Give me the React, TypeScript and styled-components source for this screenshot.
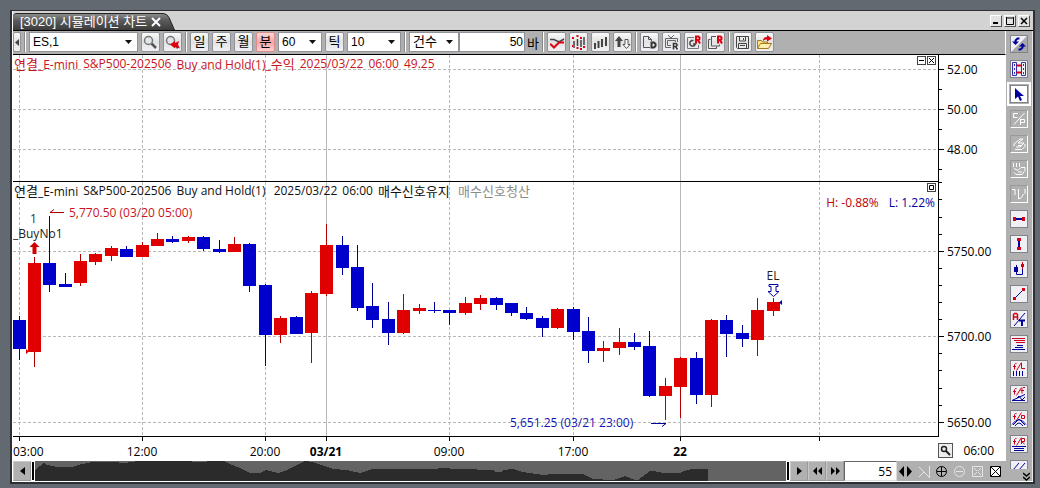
import React from "react";
import styled, { createGlobalStyle, css } from "styled-components";

const chartFont = `"Open Sans", "Noto Sans CJK KR", sans-serif`;
const uiFont = `"Liberation Sans", "Noto Sans CJK KR", sans-serif`;
const RED = "#e00000";
const BLUE = "#0000cc";
const NAVY = "#00009c";
const GREY = "#b0b0b0";

const GlobalStyle = createGlobalStyle`
  * { box-sizing: border-box; }
  body { margin: 0; background: #636970; font-family: ${chartFont}; font-size: 12px; color: #000; }
  button, input, select { font: inherit; color: inherit; margin: 0; padding: 0; border-radius: 0; }
  svg { display: block; flex: none; }
`;

const Page = styled.div`
  min-height: 100vh;
  padding: 10px 5px 4px 10px;
`;
const Window = styled.div`
  border: 2px solid #2c2f33;
  border-top-width: 1px;
  background: #fff;
  padding: 0 0 1px 1px;
`;
const TitleBar = styled.header`
  display: flex;
  align-items: flex-end;
  height: 20px;
  padding-right: 3px;
  background: #d3d3d3;
  border-bottom: 1px solid #000;
`;
const Tab = styled.div`
  display: flex;
  align-items: center;
  height: 17px;
  padding-left: 7px;
  gap: 4px;
  border-top: 1px solid #222;
  border-top-left-radius: 4px;
  background: linear-gradient(#8a8a8a, #5c5c5c 40%, #3c3c3c);
  color: #fff;
  font-family: ${uiFont};
  font-size: 13px;
  line-height: 16px;
  white-space: nowrap;
`;
const TabClose = styled.button`
  border: 0;
  background: none;
  width: 10px;
  height: 10px;
`;
const Controls = styled.div`
  display: flex;
  gap: 2px;
  margin-left: auto;
  align-self: center;
`;
const WinButton = styled.button`
  display: grid;
  place-items: center;
  width: 12px;
  height: 12px;
  background: #e4e4e4;
  border: 1px solid #fff;
  border-right-color: #555;
  border-bottom-color: #555;
`;
const Body = styled.div`
  display: flex;
`;
const Main = styled.main`
  flex: 1;
  min-width: 0;
`;

const Toolbar = styled.div`
  display: flex;
  align-items: flex-start;
  gap: 3px;
  height: 24px;
  padding-top: 1px;
  overflow: hidden;
  background: ${GREY};
  border-bottom: 1px solid #000;
  border-right: 1px solid #fff;
  font-family: ${uiFont};
  font-size: 12px;
`;
const ToolButton = styled.button<{ $on?: boolean; $slim?: boolean }>`
  display: grid;
  place-items: center;
  flex: none;
  width: ${(p) => (p.$slim ? 8 : 19)}px;
  height: 20px;
  border: 1px solid ${(p) => (p.$on ? "#d88c8c" : "#8f9299")};
  border-radius: 2px;
  background: ${(p) =>
    p.$on
      ? "linear-gradient(#fbd9d9, #f5a5a5 50%, #fcd0d0)"
      : "linear-gradient(#fafafa, #e2e2e4 50%, #f2f2f4)"};
  font-size: 13px;
  line-height: 16px;
`;
const Divider = styled.i`
  flex: none;
  width: 2px;
  height: 20px;
  border-left: 1px solid #8a8a8a;
  background: #fff;
`;
const Combo = styled.label<{ $w: number }>`
  position: relative;
  flex: none;
  width: ${(p) => p.$w}px;
  height: 20px;
  svg {
    position: absolute;
    right: 6px;
    top: 8px;
    pointer-events: none;
  }
`;
const fieldLook = css`
  width: 100%;
  height: 20px;
  border: 1px solid #8f9299;
  background: #fff;
  line-height: 18px;
`;
const ComboSelect = styled.select<{ $hangul?: boolean }>`
  ${fieldLook}
  appearance: none;
  padding-left: 3px;
  font-size: ${(p) => (p.$hangul ? 13 : 12)}px;
`;
const CountField = styled.label`
  display: flex;
  align-items: center;
  flex: none;
  gap: 2px;
  margin-left: -3px;
  font-size: 13px;
`;
const CountInput = styled.input`
  ${fieldLook}
  width: 66px;
  padding-right: 1px;
  text-align: right;
  font-size: 12px;
`;

const Pane = styled.section<{ $h: number }>`
  display: flex;
  height: ${(p) => p.$h}px;
`;
const Plot = styled.div`
  position: relative;
  flex: 1;
  min-width: 0;
  overflow: hidden;
  border-right: 1px solid #000;
  border-bottom: 1px solid #000;
`;
const Caption = styled.p<{ $color: string; $gap: number }>`
  position: absolute;
  left: 1px;
  top: 1px;
  display: flex;
  gap: ${(p) => p.$gap}px;
  margin: 0;
  color: ${(p) => p.$color};
  line-height: 16px;
  white-space: nowrap;
`;
const Hangul = styled.span<{ $muted?: boolean }>`
  font-size: 13px;
  color: ${(p) => (p.$muted ? "#8c8c8c" : "inherit")};
`;
const PaneButtons = styled.div`
  position: absolute;
  top: 1px;
  right: 2px;
  display: flex;
  gap: 1px;
`;
const PaneButton = styled.button`
  display: grid;
  place-items: center;
  width: 9px;
  height: 9px;
  border: 1px solid #444;
  background: #fff;
`;
const Extremes = styled.p`
  position: absolute;
  right: 3px;
  top: 13px;
  margin: 0;
  display: flex;
  gap: 10px;
  line-height: 16px;
  color: #c00000;
  span + span { color: #0000a0; }
`;
const Axis = styled.div`
  flex: none;
  width: 67px;
`;
const TimeAxis = styled.div`
  display: flex;
  height: 24px;
`;
const TimePlot = styled.div`
  flex: 1;
  min-width: 0;
  overflow: hidden;
`;
const TimeSide = styled.div`
  flex: none;
  display: flex;
  align-items: center;
  justify-content: space-between;
  width: 68px;
  padding: 2px 12px 0 0;
`;
const ZoomButton = styled.button`
  display: grid;
  place-items: center;
  width: 15px;
  height: 15px;
  border: 1px solid #555;
  background: #eee;
`;

const Scroller = styled.div`
  display: flex;
  align-items: stretch;
  height: 20px;
  background: ${GREY};
`;
const Step = styled.button`
  display: grid;
  place-items: center;
  flex: none;
  width: 18px;
  border: 1px solid #c8c8c8;
  border-right-color: #999;
  border-bottom-color: #999;
  background: ${GREY};
`;
const Track = styled.div`
  display: flex;
  flex: 1;
  min-width: 0;
  background: #636363;
`;
const Overview = styled.div`
  flex: 1;
  min-width: 0;
  overflow: hidden;
`;
const Handle = styled.i`
  flex: none;
  width: 4px;
  border: 1px solid #fff;
  background: #000;
`;
const BarCount = styled.input`
  flex: none;
  width: 53px;
  border: 1px solid #666;
  border-right-color: #ddd;
  border-bottom-color: #ddd;
  background: #fff;
  text-align: right;
  padding-right: 4px;
`;
const ScaleTools = styled.div`
  display: flex;
  flex: none;
  align-items: center;
  justify-content: space-between;
  width: 109px;
  padding: 0 3px 0 1px;
`;
const ScaleButton = styled.button`
  display: grid;
  place-items: center;
  width: 15px;
  height: 16px;
  border: 0;
  background: none;
`;

const Sidebar = styled.nav`
  display: flex;
  flex-direction: column;
  align-items: center;
  flex: none;
  gap: 7px;
  width: 27px;
  padding-top: 4px;
  border-right: 1px solid #e8e8e8;
  background: ${GREY};
`;
const DrawButton = styled.button<{ $state?: "on" | "off"; $cut?: boolean }>`
  display: flex;
  align-items: flex-start;
  flex: none;
  width: 18px;
  height: ${(p) => (p.$cut ? 9 : 18)}px;
  overflow: hidden;
  border: 1px solid #80838a;
  ${(p) => p.$cut && "border-bottom: 0;"}
  background: #f0f0f4;
  ${(p) =>
    p.$state === "off" &&
    css`
      border-color: #999 #fff #fff #999;
      background: ${GREY};
    `}
  ${(p) =>
    p.$state === "on" &&
    css`
      background: #fff;
      outline: 2px solid #fff;
      outline-offset: 1px;
    `}
`;
const MoreButton = styled.button`
  align-self: flex-end;
  margin: -4px 2px 0 0;
  border: 0;
  background: none;
`;

type GlyphProps = { w?: number; h?: number; children: React.ReactNode };
const Glyph = ({ w = 16, h = 16, children }: GlyphProps) => (
  <svg width={w} height={h} viewBox={`0 0 ${w} ${h}`} fill="none" aria-hidden="true">
    {children}
  </svg>
);
const Arrow = () => (
  <Glyph w={7} h={4}><path d="M0 0h7L3.500 4z" fill="#111" /></Glyph>
);

/* Toolbar drawings, 17 x 17 */
const lens = (
  <>
    <path d="M9.500 9.500L14 14" stroke="#555" strokeWidth="2.500" />
    <circle cx="6.500" cy="6.500" r="4" fill="#dfe6ea" stroke="#777" strokeWidth="1.500" />
  </>
);
const redR = <path d="M11 9.500V2.500h2.500l1 1v1.500l-1 1H11M13 6l2 3.500" stroke="#e00010" strokeWidth="2" />;
const toolIcons: Record<string, React.ReactNode> = {
  search: lens,
  searchBack: (
    <>
      {lens}
      <path d="M6 10.500L11 7v2l4-2-1 3.500 2 4-5-2v2z" fill="#e00010" />
    </>
  ),
  trend: (
    <>
      <path d="M2 5.500h4l4 2h2l4-2.500" stroke="#444" strokeWidth="1.500" />
      <path d="M2 10.500h1l3 3 5-5h5" stroke="#e00010" strokeWidth="2" />
    </>
  ),
  bars: (
    <>
      <path d="M4 7v7M7.500 5v7M11 6v7M14 3v8" stroke="#444" strokeWidth="1.500" />
      <path d="M2 3h2v2H2zM6.500 1h2v2h-2zM10 3h2v2h-2zM2 11h1v2H2zM6.500 13h2v2h-2zM10 14h2v2h-2zM13 12h2v2h-2z" fill="#e00010" />
    </>
  ),
  volume: <path d="M3 9v6M6.500 7v7M10 5v8M14 3v9" stroke="#444" strokeWidth="2" />,
  updown: (
    <>
      <path d="M5 2l4 5H6.500v6h-3V7H1z" fill="#444" />
      <path d="M11 5.500h3v5h2l-3.500 4-3.500-4h2z" fill="#fff" stroke="#555" />
    </>
  ),
  docD: (
    <>
      <path d="M9 13.500H2.500v-11h5l3 3V7M7.500 2.500v3h3" stroke="#555" />
      <path d="M10.500 8.500H13l1.500 1.500v2L13 13.500h-2.500z" stroke="#333" strokeWidth="2" />
    </>
  ),
  tvR: (
    <>
      <path d="M5 1l3 3 3-3M8 13.500H2.500V4.500h12V8M8 11.500H4.500v-5h8V8" stroke="#666" />
      <path d="M10.500 15.500V9.500H13l1 1v1l-1 1h-2.500M12.500 12.500l2 3" stroke="#333" strokeWidth="1.500" />
    </>
  ),
  refreshR: (
    <>
      <path d="M9 3.500H2.500v11h11V11" stroke="#777" />
      <path d="M8.500 6.500h-2L5 8v2.500L6.500 12H9l1.500-2H8" stroke="#444" strokeWidth="1.500" />
      {redR}
    </>
  ),
  stackR: (
    <>
      <path d="M3.500 5.500h-2v9h8v-2" stroke="#555" />
      <path d="M9 2.500H4.500v9.500h8v-1.500" stroke="#555" />
      {redR}
    </>
  ),
  save: (
    <>
      <path d="M2.500 2.500h12v12h-11l-1-1z" stroke="#444" />
      <path d="M5.500 3v4h6V3M4.500 14v-4.500h8V14M9.500 4v2M6 11.500h5" stroke="#444" />
    </>
  ),
  open: (
    <>
      <path d="M1.500 14.500V6.500h4l1 1.500h5v2" fill="#ffe48a" stroke="#a8781c" />
      <path d="M1.500 14.500l3-5h11l-3 5z" fill="#ffeeb0" stroke="#a8781c" />
      <path d="M7 7q0-4 4-4V1l5 3.500-5 3V5.500Q8.500 5 7 7z" fill="#e00010" />
    </>
  ),
};
const Tool = ({ icon, label }: { icon: string; label: string }) => (
  <ToolButton aria-label={label}><Glyph w={17} h={17}>{toolIcons[icon]}</Glyph></ToolButton>
);

/* Small stroked marks used in the drawing palette */
const markF = "M5.500 2.500h-1l-1 1v5M2 5.500h3";
const slash = "M5.500 9.500l5-8";

type Draw = { label: string; state?: "on" | "off"; cut?: boolean; art: React.ReactNode };
const drawTools: Draw[] = [
  {
    label: "새로고침",
    art: (
      <>
        <path d="M0 16L16 0v16z" fill="#a8a8a8" />
        <path d="M8.500 2.500h-2l-2 2v2" stroke={NAVY} strokeWidth="2" />
        <path d="M1 5.500h7L4.500 9z" fill={NAVY} />
        <path d="M7.500 13.500h2l2-2v-2" stroke={NAVY} strokeWidth="2" />
        <path d="M8 10.500h7L11.500 7z" fill={NAVY} />
      </>
    ),
  },
  {
    label: "차트 연결",
    art: (
      <>
        <path d="M1.500 1.500h4v13h-4zM10.500 1.500h4v13h-4zM3.500 3v2M3.500 7v2M3.500 11v2M12.500 3v2M12.500 7v2M12.500 11v2" stroke="#3030a8" />
        <path d="M5 4.500h6M5 11.500h6M7 3v3M9 3v3M7 10v3M9 10v3" stroke="#d00018" />
      </>
    ),
  },
  { label: "선택", state: "on", art: <path d="M4 2v11l3-2.500 2 4.500 2-1-2-4h4z" fill={NAVY} /> },
  { label: "추세 각도", state: "off", art: <path d="M7 2.500H2.500v4h4M3 13.500L13.500 2M9 8.500h4.500v3H9M9.500 9v5" stroke="#fff" /> },
  { label: "지우개", state: "off", art: <path d="M3 10V8l6-5h3l-5 4h6l-4 4H5M4 13.500h7l3-3V8M7 9.500h3" stroke="#fff" /> },
  { label: "모두 지우기", state: "off", art: <path d="M2.500 2v4M5.500 2v4M8.500 2v4M3 7.500l4 2 3-3h4v3l-3 4H5l-2-2M7 11h4" stroke="#fff" /> },
  { label: "되돌리기", state: "off", art: <path d="M1 3.500h3V9M7.500 3v10M7.500 13q3 0 5-5M14 3v5" stroke="#fff" /> },
  { label: "수평선", art: (<><path d="M3 8h10" stroke={NAVY} strokeWidth="2" /><path d="M2 6h3v4H2zM11 6h3v4h-3z" fill="#d00018" /></>) },
  { label: "수직선", art: (<><path d="M8 4v8" stroke={NAVY} strokeWidth="2" /><path d="M6 2h4v3H6zM6 11h4v3H6z" fill="#d00018" /></>) },
  { label: "자석", art: (<><path d="M3 6h4v5H3z" fill={NAVY} /><path d="M5.500 4v9.500h6V8" stroke={NAVY} /><path d="M10 3h3v3h-3z" fill="#d00018" /><path d="M11.500 1v7" stroke="#d00018" /></>) },
  { label: "추세선", art: (<><path d="M3 13L13 3" stroke={NAVY} /><path d="M2 11h3v3H2zM11 2h3v3h-3z" fill="#d00018" /></>) },
  { label: "텍스트", art: (<><path d="M2.500 9V3.500l1-1h2l1 1V9M2.500 6h4" stroke="#d00018" strokeWidth="1.500" /><path d="M3 15L14 2" stroke={NAVY} /><path d="M8 9.500h6M11 9v6" stroke={NAVY} strokeWidth="2" /></>) },
  { label: "되돌림", art: (<><path d="M1 2.500h13M3 4.500h11M5 6.500h9" stroke="#d00018" /><path d="M6 9.500h6M4 11.500h8M1 13.500h13" stroke={NAVY} /></>) },
  { label: "피보나치 선", art: (<><path d={`${markF}${slash}M10.500 2v5.500H14`} stroke="#d00018" /><path d="M2.500 10v5M5.500 10v5M8.500 10v5M11.500 10v5" stroke={NAVY} /></>) },
  { label: "피보나치 팬", art: (<><path d={`${markF}${slash}M14 1.500h-2l-1 1v5M9.500 4.500H13`} stroke="#d00018" /><path d="M1 14.500h13M1 14.500l13-6M5 13l3-3 3 4 3-3" stroke={NAVY} /></>) },
  { label: "피보나치 원호", art: (<><path d={`${markF}${slash}M10.500 7.500V4.500h3v3z`} stroke="#d00018" /><path d="M1 13.500Q8 4 15 13.500M4 15q4-6 8 0M8 8L2 14M8 8l6 6" stroke={NAVY} /></>) },
  { label: "피보나치 범위", art: (<><path d={`${markF}${slash}M10.500 8V2.500h3v3h-3l3 2.500`} stroke="#d00018" /><path d="M1 10.500h14M3 12.500h10M3 14.500h10" stroke={NAVY} /></>) },
  { label: "평행선", cut: true, art: <path d="M2 9L8 2M8 9l6-7" stroke={NAVY} /> },
];

/* Candles: centre x, rising?, high, body top, body bottom, low */
type Candle = [number, 0 | 1, number, number, number, number];
const candles: Candle[] = [
  [19, 0, 316, 320, 349, 360], [34, 1, 257, 263, 352, 367], [49, 0, 216, 263, 285, 292],
  [65, 0, 273, 284, 287, 287], [80, 1, 254, 261, 283, 286], [95, 1, 253, 254, 262, 265],
  [111, 1, 246, 248, 256, 261], [126, 0, 246, 249, 257, 257], [142, 1, 242, 245, 257, 257],
  [157, 1, 233, 239, 246, 246], [172, 0, 236, 239, 242, 243], [188, 1, 236, 237, 241, 243],
  [203, 0, 236, 237, 249, 251], [219, 0, 240, 249, 252, 253], [234, 1, 237, 244, 252, 252],
  [249, 0, 243, 244, 286, 292], [265, 0, 284, 285, 335, 366], [280, 1, 316, 318, 335, 343],
  [296, 0, 316, 317, 334, 334], [311, 1, 291, 293, 333, 363], [326, 1, 224, 245, 294, 296],
  [342, 0, 236, 245, 268, 275], [357, 0, 245, 267, 308, 311], [372, 0, 283, 306, 320, 328],
  [388, 0, 302, 319, 333, 345], [403, 1, 294, 310, 333, 334], [419, 1, 304, 308, 311, 314],
  [434, 0, 302, 310, 311, 313], [449, 0, 310, 310, 313, 325], [465, 1, 297, 303, 313, 315],
  [480, 1, 295, 298, 304, 310], [496, 0, 297, 298, 305, 310], [511, 0, 303, 303, 313, 316],
  [526, 0, 307, 313, 319, 320], [542, 0, 316, 318, 328, 337], [557, 1, 308, 309, 328, 329],
  [573, 0, 307, 309, 332, 340], [588, 0, 317, 331, 351, 363], [603, 1, 341, 348, 351, 362],
  [619, 1, 328, 342, 348, 355], [634, 0, 333, 342, 347, 350], [649, 0, 331, 346, 396, 397],
  [665, 1, 378, 386, 396, 420], [680, 1, 357, 358, 387, 418], [696, 0, 352, 358, 395, 404],
  [711, 1, 319, 320, 395, 407], [726, 0, 315, 320, 334, 357], [742, 0, 325, 333, 339, 347],
  [757, 1, 298, 310, 340, 356], [773, 1, 298, 302, 311, 316],
];
const LEFT = 13;
const times: { x: number; label?: string; day?: boolean }[] = [
  { x: 19, label: "03:00" }, { x: 142, label: "12:00" }, { x: 265, label: "20:00" },
  { x: 326, label: "03/21", day: true }, { x: 449, label: "09:00" }, { x: 573, label: "17:00" },
  { x: 680, label: "22", day: true }, { x: 819 },
];

const Grid = ({ rows, height }: { rows: number[]; height: number }) => (
  <g stroke="#b8b8b8" shapeRendering="crispEdges">
    {rows.map((y) => (
      <line key={y} x1="0" x2="100%" y1={y + 0.5} y2={y + 0.5} strokeDasharray="3 2" />
    ))}
    {times.map((t) => (
      <line
        key={t.x}
        x1={t.x - LEFT + 0.5}
        x2={t.x - LEFT + 0.5}
        y1="0"
        y2={height}
        strokeDasharray={t.day ? undefined : "3 2"}
      />
    ))}
  </g>
);

type ScaleProps = { height: number; major: [number, string][]; minor: number[] };
const Scale = ({ height, major, minor }: ScaleProps) => (
  <Axis>
    <svg width="67" height={height}>
      <g stroke="#000" shapeRendering="crispEdges">
        {major.map(([y]) => <line key={y} x1="0" x2="5" y1={y + 0.5} y2={y + 0.5} />)}
        {minor.map((y) => <line key={y} x1="0" x2="3" y1={y + 0.5} y2={y + 0.5} />)}
      </g>
      {major.map(([y, label]) => (
        <text key={label} x="8" y={y + 5} fontSize="12">{label}</text>
      ))}
    </svg>
  </Axis>
);

const overview =
  "33,472 35,470 40,466 44,463 47,465 57,467 72,467 82,464 93,462 113,462 125,463 138,461 183,461 200,462 213,461 224,461 230,464 240,468 250,473 260,473 266,470 278,473 287,470 293,467 305,461 312,462 322,465 333,469 347,470 360,473 373,469 435,469 440,468 460,469 493,470 495,472 502,472 503,470 513,469 523,472 543,475 553,474 583,474 593,479 613,480 625,476 635,480 638,480 650,471 653,471 663,473 680,473 687,470 692,469 708,469 708,481 33,481";

const off = "#e4e4e4";
const scaleIcons: [string, React.ReactNode][] = [
  ["간격 넓히기", <path d="M6 2v11L1 7.500zM9 2v11l5-5.500z" fill="#000" />],
  ["간격 좁히기", <path d="M3 3l10 10M3 13l5-5M13.500 2v12" stroke={off} />],
  ["확대", <><circle cx="7.500" cy="7.500" r="5" stroke="#000" /><path d="M3 7.500h9M7.500 3v9" stroke="#000" /></>],
  ["축소", <><circle cx="7.500" cy="7.500" r="5" stroke={off} /><path d="M4 7.500h7" stroke={off} /></>],
  ["맞춤", <><path d="M2.500 2.500h10v10h-10z" stroke={off} /><path d="M4 4l3 3M11 4L8 7M4 11l3-3M11 11L8 8" stroke={off} /></>],
  ["초기화", <><path d="M2.500 2.500h10v10h-10z" fill="#fff" stroke="#000" /><path d="M3 3l9 9M12 3l-9 9" stroke="#000" /></>],
];

export default function App() {
  return (
    <Page>
      <GlobalStyle />
      <Window>
        <TitleBar>
          <Tab>
            [3020] 시뮬레이션 차트
            <TabClose aria-label="탭 닫기">
              <Glyph w={10} h={10}><path d="M1 1l8 8M9 1L1 9" stroke="#fff" strokeWidth="2" /></Glyph>
            </TabClose>
          </Tab>
          <svg width="14" height="17" aria-hidden="true">
            <defs>
              <linearGradient id="tab" x2="0" y2="1">
                <stop stopColor="#8a8a8a" />
                <stop offset=".4" stopColor="#5c5c5c" />
                <stop offset="1" stopColor="#3c3c3c" />
              </linearGradient>
            </defs>
            <path d="M0 .5h2q4 0 6 4L13.500 17H0z" fill="url(#tab)" />
            <path d="M0 .5h2q4 0 6 4L13.500 17" fill="none" stroke="#222" />
          </svg>
          <Controls>
            <WinButton aria-label="최소화"><Glyph w={8} h={8}><path d="M1 6h5" stroke="#000" strokeWidth="2" /></Glyph></WinButton>
            <WinButton aria-label="최대화"><Glyph w={8} h={8}><path d="M.5 1h7M.5 0v7.500h7V0" stroke="#000" /></Glyph></WinButton>
            <WinButton aria-label="닫기"><Glyph w={8} h={8}><path d="M1 1l6 6M7 1L1 7" stroke="#000" strokeWidth="1.500" /></Glyph></WinButton>
          </Controls>
        </TitleBar>

        <Body>
          <Main>
            <Toolbar>
              <ToolButton $slim aria-label="이전"><Glyph w={4} h={7}><path d="M4 0v7L0 3.500z" fill="#444" /></Glyph></ToolButton>
              <Divider />
              <Combo $w={109}>
                <ComboSelect aria-label="종목"><option>ES,1</option></ComboSelect>
                <Arrow />
              </Combo>
              <Tool icon="search" label="종목 검색" />
              <Tool icon="searchBack" label="이전 종목" />
              <Divider />
              <ToolButton>일</ToolButton>
              <ToolButton>주</ToolButton>
              <ToolButton>월</ToolButton>
              <ToolButton $on>분</ToolButton>
              <Combo $w={44}>
                <ComboSelect aria-label="분 간격"><option>60</option></ComboSelect>
                <Arrow />
              </Combo>
              <ToolButton>틱</ToolButton>
              <Combo $w={54}>
                <ComboSelect aria-label="틱 간격"><option>10</option></ComboSelect>
                <Arrow />
              </Combo>
              <Divider />
              <Combo $w={50}>
                <ComboSelect $hangul aria-label="조회 기준"><option>건수</option></ComboSelect>
                <Arrow />
              </Combo>
              <CountField>
                <CountInput defaultValue="50" />
                바
              </CountField>
              <Divider />
              <Tool icon="trend" label="추세" />
              <Tool icon="bars" label="봉 유형" />
              <Tool icon="volume" label="거래량" />
              <Tool icon="updown" label="정렬" />
              <Divider />
              <Tool icon="docD" label="데이터 문서" />
              <Tool icon="tvR" label="실시간 화면" />
              <Tool icon="refreshR" label="다시 실행" />
              <Tool icon="stackR" label="복수 실행" />
              <Divider />
              <Tool icon="save" label="저장" />
              <Tool icon="open" label="열기" />
            </Toolbar>

            <Pane $h={127}>
              <Plot>
                <svg width="100%" height="126"><Grid rows={[14, 54, 94]} height={126} /></svg>
                <Caption $color="#c8141c" $gap={5}>
                  <span><Hangul>연결</Hangul>_E-mini</span>
                  <span>S&amp;P500-202506</span>
                  <span>Buy and Hold(1)_<Hangul>수익</Hangul></span>
                  <span>2025/03/22</span>
                  <span>06:00</span>
                  <span>49.25</span>
                </Caption>
                <PaneButtons>
                  <PaneButton aria-label="창 접기"><Glyph w={7} h={7}><path d="M1 3.500h5" stroke="#000" /></Glyph></PaneButton>
                  <PaneButton aria-label="창 닫기"><Glyph w={7} h={7}><path d="M1 1l5 5M6 1L1 6" stroke="#000" /></Glyph></PaneButton>
                </PaneButtons>
              </Plot>
              <Scale height={127} major={[[14, "52.00"], [54, "50.00"], [94, "48.00"]]} minor={[34, 74, 114]} />
            </Pane>

            <Pane $h={255}>
              <Plot>
                <svg width="100%" height="254">
                  <Grid rows={[69, 154, 240]} height={254} />
                  <g transform="translate(-13 -182)" shapeRendering="crispEdges">
                    {candles.map(([x, up, high, top, bottom, low]) => (
                      <g key={x}>
                        <rect x={x} y={high} width="1" height={low - high} fill={up ? "#b00000" : "#000090"} />
                        <rect x={x - 6} y={top} width="13" height={bottom - top} fill={up ? RED : BLUE} />
                      </g>
                    ))}
                  </g>
                  <g transform="translate(-13 -182)" fontSize="12">
                    <path d="M64 212.500H50M54 209.500l-4 3" stroke="#b00000" fill="none" />
                    <text x="69" y="217" fill="#c8141c">5,770.50 (03/20 05:00)</text>
                    <text x="30" y="223" fill="#333">1</text>
                    <text x="13" y="238" fill="#222">_BuyNo1</text>
                    <path d="M34.500 242l5 5h-3v7h-4v-7h-3z" fill="#d40000" />
                    <path d="M26 349l3 2.500-3 2.500z" fill="#d40000" />
                    <text x="510" y="427" fill="#1414b4">5,651.25 (03/21 23:00)</text>
                    <path d="M651 423.500h15l-4 3" stroke={NAVY} fill="none" />
                    <text x="773" y="280" textAnchor="middle" fill="#222">EL</text>
                    <path d="M769 284.500h9v2h-2v5h3l-5.500 5-5.500-5h3v-5h-2z" fill="#fff" stroke={NAVY} />
                    <path d="M782 300l-3 2.500 3 2.500z" fill={NAVY} />
                  </g>
                </svg>
                <Caption $color="#111" $gap={5}>
                  <span><Hangul>연결</Hangul>_E-mini</span>
                  <span>S&amp;P500-202506</span>
                  <span>Buy and Hold(1)&nbsp;</span>
                  <span>2025/03/22</span>
                  <span>06:00</span>
                  <Hangul>매수신호유지&nbsp;</Hangul>
                  <Hangul $muted>매수신호청산</Hangul>
                </Caption>
                <PaneButtons>
                  <PaneButton aria-label="창 확대"><Glyph w={7} h={7}><path d="M1.500 1.500h4v4h-4z" stroke="#000" /></Glyph></PaneButton>
                </PaneButtons>
                <Extremes><span>H: -0.88%</span><span>L: 1.22%</span></Extremes>
              </Plot>
              <Scale
                height={255}
                major={[[69, "5750.00"], [154, "5700.00"], [240, "5650.00"]]}
                minor={[0, 17, 35, 52, 86, 103, 120, 137, 171, 188, 206, 223]}
              />
            </Pane>

            <TimeAxis>
              <TimePlot>
                <svg width="100%" height="24">
                  {times.map((t) => (
                    <g key={t.x}>
                      <rect x={t.x - LEFT} y="0" width="1" height="4" />
                      <text
                        x={t.x === 19 ? 0 : t.x - LEFT}
                        y="19"
                        fontSize="12"
                        fontWeight={t.day ? 700 : 400}
                        textAnchor={t.x === 19 ? "start" : "middle"}
                      >
                        {t.label}
                      </text>
                    </g>
                  ))}
                </svg>
              </TimePlot>
              <TimeSide>
                <ZoomButton aria-label="돋보기">
                  <Glyph w={13} h={13}><circle cx="5" cy="5" r="2.500" stroke="#222" strokeWidth="1.500" /><path d="M7 7l4 4" stroke="#222" strokeWidth="2" /></Glyph>
                </ZoomButton>
                06:00
              </TimeSide>
            </TimeAxis>

            <Scroller>
              <Step aria-label="왼쪽으로"><Glyph w={5} h={8}><path d="M5 0v8L0 4z" fill="#000" /></Glyph></Step>
              <Track>
                <Handle />
                <Overview>
                  <svg width="700" height="20">
                    <polygon transform="translate(-35 -461)" points={overview} fill="#2b2b2b" shapeRendering="crispEdges" />
                  </svg>
                </Overview>
                <Handle />
              </Track>
              <Step aria-label="오른쪽으로"><Glyph w={5} h={8}><path d="M0 0v8l5-4z" fill="#000" /></Glyph></Step>
              <Step aria-label="빠르게 왼쪽으로"><Glyph w={9} h={8}><path d="M4 0v8L0 4zM9 0v8L5 4z" fill="#000" /></Glyph></Step>
              <Step aria-label="빠르게 오른쪽으로"><Glyph w={9} h={8}><path d="M0 0v8l4-4zM5 0v8l4-4z" fill="#000" /></Glyph></Step>
              <BarCount aria-label="표시 봉 수" defaultValue="55" />
              <ScaleTools>
                {scaleIcons.map(([label, art]) => (
                  <ScaleButton key={label} aria-label={label}><Glyph w={15} h={15}>{art}</Glyph></ScaleButton>
                ))}
              </ScaleTools>
            </Scroller>
          </Main>

          <Sidebar aria-label="그리기 도구">
            {drawTools.map((t) => (
              <DrawButton key={t.label} $state={t.state} $cut={t.cut} aria-label={t.label}>
                <Glyph>{t.art}</Glyph>
              </DrawButton>
            ))}
            <MoreButton aria-label="더 보기">
              <Glyph w={7} h={9}><path d="M0 1l3.500 3L7 1M0 5l3.500 3L7 5" stroke="#000" strokeWidth="1.500" /></Glyph>
            </MoreButton>
          </Sidebar>
        </Body>
      </Window>
    </Page>
  );
}
